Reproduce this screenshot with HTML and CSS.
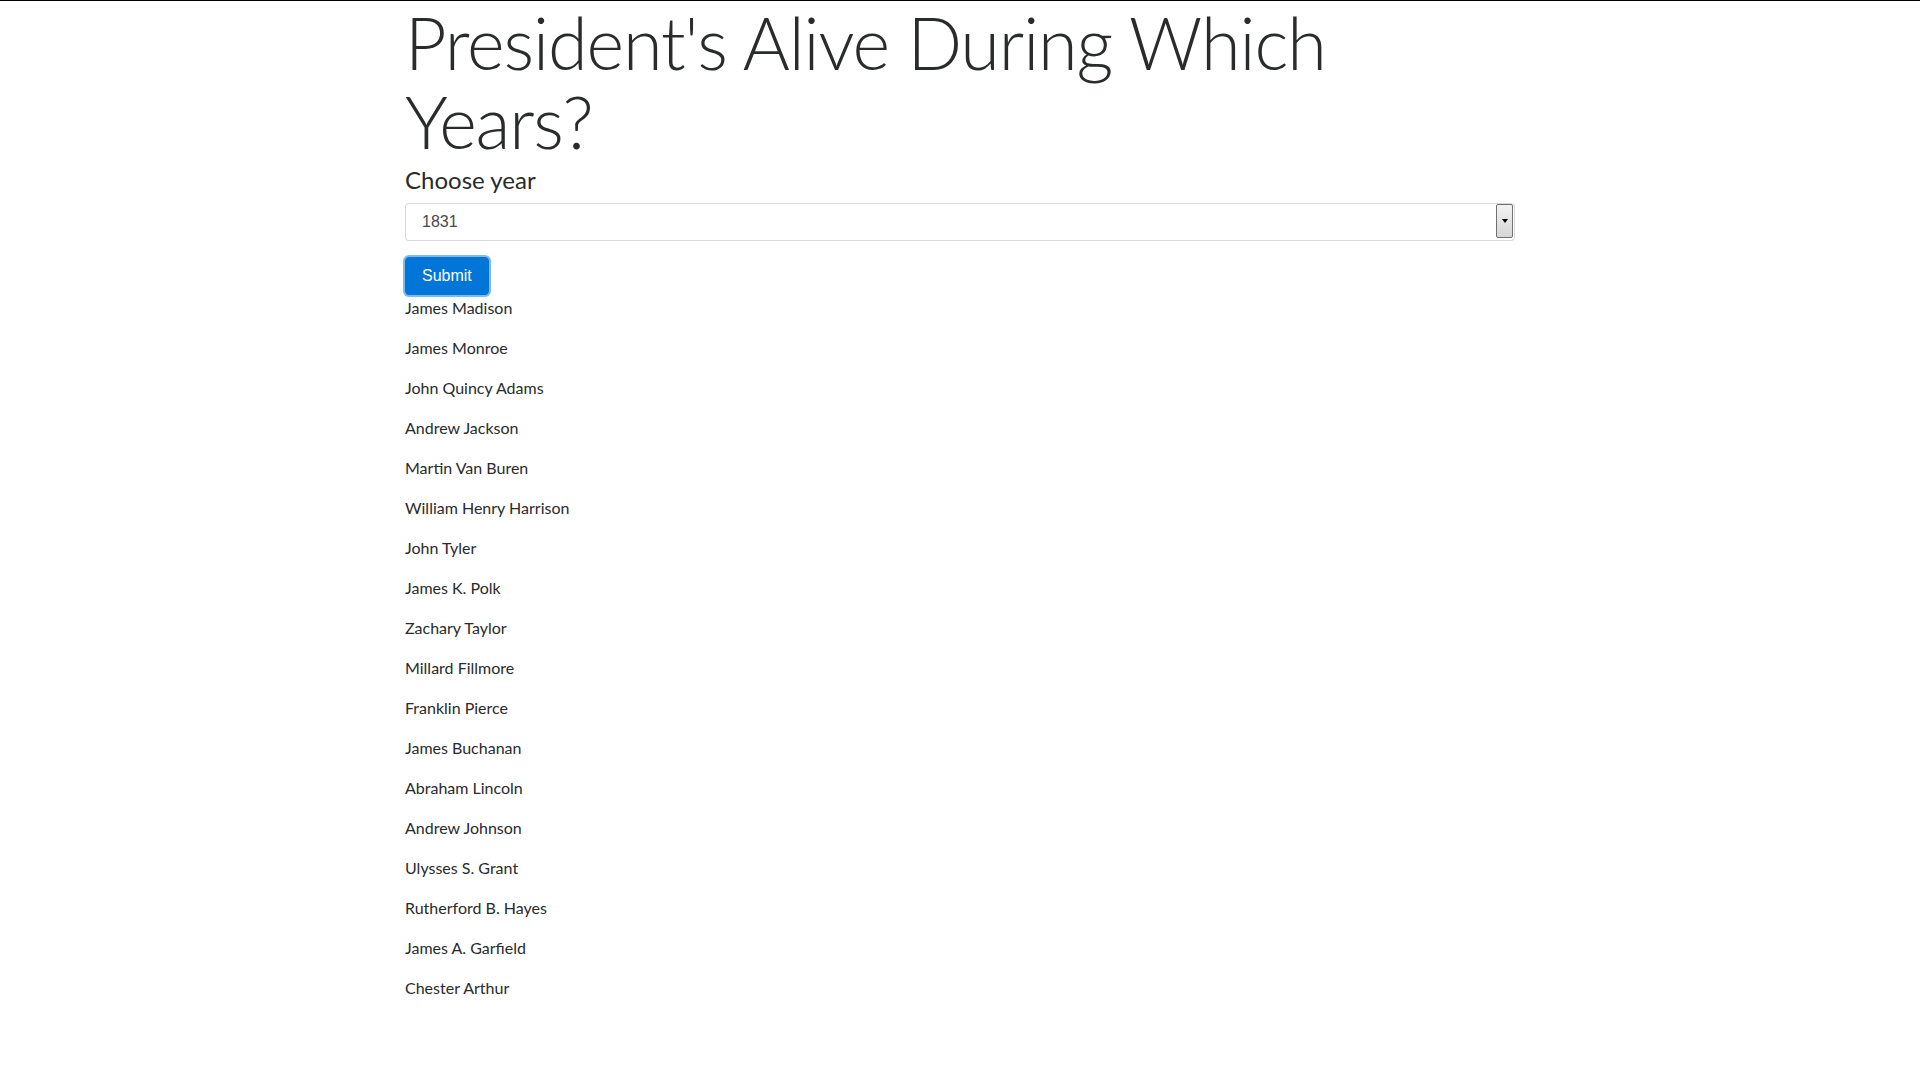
FILE: index.html
```html
<!DOCTYPE html>
<html lang="en">
<head>
<meta charset="utf-8">
<title>President's Alive During Which Years?</title>
<link rel="stylesheet" href="styles.css">
</head>
<body>
<div class="topline"></div>
<div class="container">
  <h1 class="display-3">President's Alive During Which Years?</h1>
  <form class="year-form">
    <div class="form-group">
      <label class="h4" for="year">Choose year</label>
      <div class="select-wrap">
        <select id="year" class="form-control">
          <option>1831</option>
        </select>
        <span class="select-btn"><span class="tri"></span></span>
      </div>
    </div>
    <button type="button" class="btn btn-primary focus">Submit</button>
  </form>
  <div class="results">
    <p>James Madison</p>
    <p>James Monroe</p>
    <p>John Quincy Adams</p>
    <p>Andrew Jackson</p>
    <p>Martin Van Buren</p>
    <p>William Henry Harrison</p>
    <p>John Tyler</p>
    <p>James K. Polk</p>
    <p>Zachary Taylor</p>
    <p>Millard Fillmore</p>
    <p>Franklin Pierce</p>
    <p>James Buchanan</p>
    <p>Abraham Lincoln</p>
    <p>Andrew Johnson</p>
    <p>Ulysses S. Grant</p>
    <p>Rutherford B. Hayes</p>
    <p>James A. Garfield</p>
    <p>Chester Arthur</p>
  </div>
</div>
</body>
</html>
```

FILE: styles.css
```css
* { box-sizing: border-box; }
html, body { margin: 0; padding: 0; }
body {
  font-family: "Lato", "Open Sans", sans-serif;
  font-size: 16px;
  line-height: 1.5;
  color: #292b2c;
  background: #fff;
}
.topline { height: 1px; background: #000; }
.container {
  width: 1140px;
  margin: 0 auto;
  padding: 0 15px;
}
h1.display-3 {
  font-family: "Lato", sans-serif;
  font-weight: 300;
  font-size: 72px;
  line-height: 1.1;
  letter-spacing: -1.1px;
  padding-top: 2px;
  margin: 0 0 6px 0;
  color: #292b2c;
}
.year-form { margin: 0; }
.form-group { margin-bottom: 16px; }
label.h4 {
  display: inline-block;
  font-size: 24px;
  line-height: 1.1;
  font-weight: 400;
  margin-bottom: 9px;
}
.select-wrap { position: relative; }
.form-control {
  display: block;
  width: 100%;
  height: 38px;
  padding: 8px 12px 8px 16px;
  font-family: "Liberation Sans", Arial, sans-serif;
  font-size: 16px;
  line-height: 1.25;
  color: #464a4c;
  background: #fff;
  border: 1px solid rgba(0,0,0,.15);
  border-radius: 4px;
  -webkit-appearance: none;
  appearance: none;
  outline: none;
}
.select-btn {
  position: absolute;
  right: 2px;
  top: 1px;
  width: 17px;
  height: 34px;
  border: 1px solid #707070;
  border-radius: 2px;
  background: linear-gradient(#f2f2f2, #d6d6d6);
  display: flex;
  align-items: center;
  justify-content: center;
  pointer-events: none;
}
.tri {
  width: 0; height: 0;
  border-left: 3.5px solid transparent;
  border-right: 3.5px solid transparent;
  border-top: 4px solid #000;
}
.btn {
  display: inline-block;
  font-family: "Liberation Sans", Arial, sans-serif;
  font-size: 16px;
  line-height: 1.25;
  padding: 8px 16px;
  border: 1px solid #0275d8;
  border-radius: 4px;
  color: #fff;
  background: #0275d8;
  cursor: pointer;
}
.btn.focus { box-shadow: 0 0 0 2px rgba(2,117,216,.5); }
.results { padding-top: 1px; }
.results p {
  margin: 0 0 16px 0;
}
```
